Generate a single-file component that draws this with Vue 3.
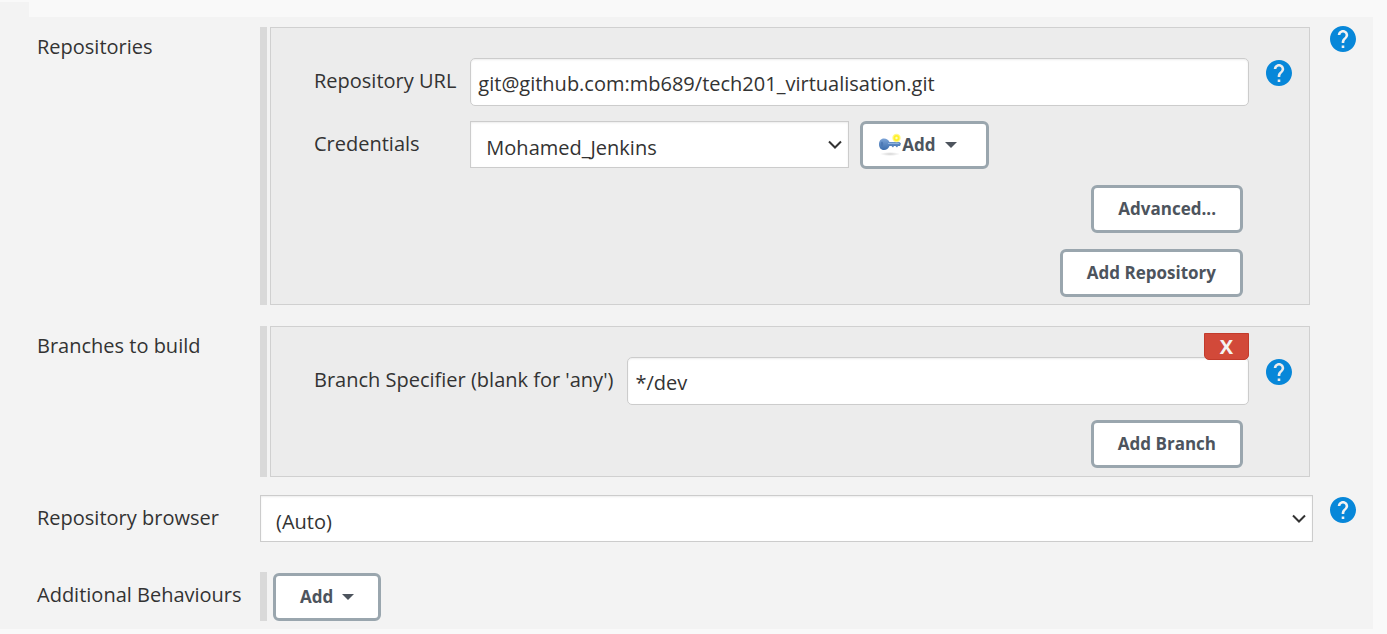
<script setup>
import { ref, h } from 'vue'

const repositoryUrl = ref('git@github.com:mb689/tech201_virtualisation.git')
const credentials = ref('Mohamed_Jenkins')
const branchSpecifier = ref('*/dev')
const browser = ref('(Auto)')

const HelpIcon = () =>
  h('svg', { viewBox: '2 2 20 20', width: 26, height: 26, 'aria-hidden': 'true' }, [
    h('path', {
      fill: '#0787d9',
      d: 'M12 2C6.48 2 2 6.48 2 12s4.48 10 10 10 10-4.48 10-10S17.520 2 12 2zm1 17h-2v-2h2v2zm2.070-7.750l-.9.920C13.450 12.900 13 13.500 13 15h-2v-.5c0-1.100.450-2.100 1.170-2.830l1.240-1.260c.370-.360.590-.860.590-1.410 0-1.100-.9-2-2-2s-2 .9-2 2H8c0-2.210 1.790-4 4-4s4 1.790 4 4c0 .880-.360 1.680-.930 2.250z',
    }),
  ])
</script>

<template>
  <main class="page">
    <div class="notch"></div>
    <form class="panel" @submit.prevent>
      <section class="row repositories">
        <h2 class="row-label">Repositories</h2>
        <div class="group">
          <div class="box">
            <div class="fields">
              <label class="field-label" for="repo-url">Repository URL</label>
              <input id="repo-url" v-model="repositoryUrl" class="text-input" type="text" />
              <button class="help" type="button" aria-label="Help for Repository URL"><HelpIcon /></button>
              <label class="field-label" for="credentials">Credentials</label>
              <div class="credentials">
                <div class="select-wrap">
                  <select id="credentials" v-model="credentials" class="select">
                    <option>Mohamed_Jenkins</option>
                  </select>
                  <svg class="chevron" viewBox="0 0 14 9" width="14" height="9" aria-hidden="true"><path d="M1 1.500L7 7.500L13 1.500" /></svg>
                </div>
                <button class="btn btn-key" type="button">
                  <svg width="24" height="24" viewBox="0 0 24 24" aria-hidden="true">
                    <defs>
                      <linearGradient id="key-blue" x1="0" y1="0" x2="0" y2="1">
                        <stop offset="0" stop-color="#7ba3d6" />
                        <stop offset="1" stop-color="#3b6dad" />
                      </linearGradient>
                      <radialGradient id="key-shadow">
                        <stop offset="0" stop-color="#d4d4d4" />
                        <stop offset="1" stop-color="#ffffff" />
                      </radialGradient>
                    </defs>
                    <ellipse cx="12" cy="21" rx="10" ry="2" fill="url(#key-shadow)" />
                    <path d="M6 5.500C8.500 5.500 10.500 7 11.500 9H21.500L23 10.500L22 13H20L19 14.500L17.500 13H16L15 14.500L13.500 13H11.500C10.500 15.500 8.500 17 6 17C2.800 17 1 14.500 1 11.200S2.800 5.500 6 5.500Z" fill="url(#key-blue)" />
                    <ellipse cx="4" cy="11" rx="1.200" ry="2.500" fill="#4c79b5" />
                    <path d="M10 10.500H21" stroke="#8fb2de" stroke-width="1" />
                    <circle cx="18.500" cy="5" r="4.200" fill="#fff68a" />
                    <circle cx="18.500" cy="5" r="3" fill="#fff129" />
                    <circle cx="18.500" cy="5" r="1.200" fill="#fffbc0" />
                  </svg>
                  <span>Add</span><span class="caret"></span>
                </button>
              </div>
            </div>
            <div class="actions">
              <button class="btn" type="button">Advanced...</button>
              <button class="btn" type="button">Add Repository</button>
            </div>
          </div>
        </div>
        <button class="help" type="button" aria-label="Help for Repositories"><HelpIcon /></button>
      </section>

      <section class="row branches">
        <h2 class="row-label">Branches to build</h2>
        <div class="group">
          <div class="box">
            <div class="fields">
              <label class="field-label" for="branch">Branch Specifier (blank for 'any')</label>
              <div class="branch-input">
                <input id="branch" v-model="branchSpecifier" class="text-input" type="text" />
                <button class="delete" type="button" aria-label="Delete branch">X</button>
              </div>
              <button class="help" type="button" aria-label="Help for Branch Specifier"><HelpIcon /></button>
            </div>
            <div class="actions">
              <button class="btn" type="button">Add Branch</button>
            </div>
          </div>
        </div>
      </section>

      <section class="row browser">
        <label class="row-label" for="browser">Repository browser</label>
        <div class="select-wrap">
          <select id="browser" v-model="browser" class="select">
            <option>(Auto)</option>
          </select>
          <svg class="chevron" viewBox="0 0 14 9" width="14" height="9" aria-hidden="true"><path d="M1 1.500L7 7.500L13 1.500" /></svg>
        </div>
        <button class="help" type="button" aria-label="Help for Repository browser"><HelpIcon /></button>
      </section>

      <section class="row additional">
        <h2 class="row-label">Additional Behaviours</h2>
        <div class="group behaviours">
          <button class="btn" type="button"><span>Add</span><span class="caret"></span></button>
        </div>
      </section>
    </form>
  </main>
</template>

<style>
body {
  background: #f9f9f9;
}
</style>

<style scoped>
.page {
  padding: 2px 14px 5px 0;
  color: #333;
  font-family: "Segoe UI", "Open Sans", "Noto Sans", sans-serif;
  font-size: 20px;
  line-height: 28px;
}
.page * {
  box-sizing: border-box;
}
.notch {
  width: 29px;
  height: 15px;
  background: #f3f3f3;
}
.panel {
  padding: 10px 17px 8px 37px;
  background: #f3f3f3;
}
.row {
  display: grid;
  grid-template-columns: 223px minmax(0, 1fr) 26px;
  align-items: start;
}
.repositories {
  margin-bottom: 21px;
}
.branches {
  margin-bottom: 18px;
}
.browser {
  margin-bottom: 30px;
}
.row-label {
  margin: 0;
  padding-top: 6px;
  font-size: 20px;
  font-weight: 400;
  white-space: nowrap;
}
.browser .row-label,
.additional .row-label {
  padding-top: 9px;
}
.group {
  margin-right: 20px;
  padding-left: 3px;
  border-left: 7px solid #d9d9d9;
}
.row > .select-wrap {
  margin-right: 17px;
}
.box {
  padding: 30px 17px 7px 43px;
  background: #ececec;
  border: 1px solid #d0d0d0;
}
.branches .box {
  padding-bottom: 8px;
}
.fields {
  display: grid;
  grid-template-columns: auto minmax(0, 1fr) 26px;
  row-gap: 15px;
  align-items: start;
}
.field-label {
  padding: 9px 14px 0 0;
  white-space: nowrap;
}
.text-input,
.select {
  display: block;
  width: 100%;
  color: #333;
  font: inherit;
  background: #fff;
  border: 1px solid #ccc;
  box-shadow: inset 0 1px 2px rgba(0, 0, 0, 0.08);
  outline: none;
}
.text-input {
  height: 48px;
  padding: 2px 7px 0;
  border-radius: 5px;
}
.select {
  height: 47px;
  padding: 6px 36px 0 15px;
  border-radius: 0;
  appearance: none;
}
.select-wrap {
  position: relative;
}
.chevron {
  position: absolute;
  top: 19px;
  right: 7px;
  pointer-events: none;
}
.chevron path {
  fill: none;
  stroke: #333;
  stroke-width: 2;
}
.help {
  display: flex;
  width: 26px;
  height: 26px;
  margin-top: 2px;
  padding: 0;
  background: none;
  border: 0;
  cursor: pointer;
}
.repositories > .help {
  margin-top: -1px;
}
.fields > .text-input,
.branch-input {
  width: auto;
  margin-right: 17px;
}
.credentials {
  display: flex;
  gap: 11px;
}
.credentials .select-wrap {
  width: 379px;
}
.btn {
  display: inline-flex;
  align-items: center;
  height: 48px;
  padding: 0 24px;
  color: #4d545d;
  font: inherit;
  font-size: 17px;
  font-weight: 700;
  white-space: nowrap;
  background: #fff;
  border: 3px solid #9aa6ae;
  border-radius: 6px;
  cursor: pointer;
}
.btn-key {
  padding: 0 29px 0 15px;
}
.caret {
  margin-left: 9px;
  border: 6px solid transparent;
  border-top-color: #4d545d;
  border-bottom: 0;
}
.actions {
  display: flex;
  flex-direction: column;
  align-items: flex-end;
  gap: 16px;
  padding-right: 49px;
  margin-top: 16px;
}
.branches .actions {
  margin-top: 15px;
}
.branch-input {
  position: relative;
}
.delete {
  position: absolute;
  top: -24px;
  right: 0;
  width: 45px;
  height: 27px;
  padding: 0;
  color: #f3f3f3;
  font: inherit;
  font-size: 20px;
  font-weight: 700;
  line-height: 24px;
  background: #d24939;
  border: 1px solid #c23b2c;
  border-radius: 0 0 5px 5px;
  cursor: pointer;
}
.behaviours {
  padding: 1px 0 0 6px;
}
</style>
